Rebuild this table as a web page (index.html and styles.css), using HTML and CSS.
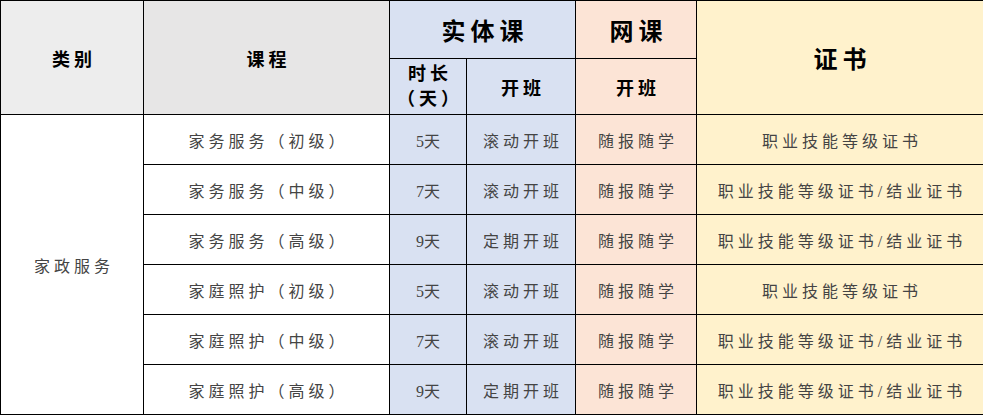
FILE: index.html
```html
<!DOCTYPE html>
<html lang="zh-CN">
<head>
<meta charset="utf-8">
<title>课程表</title>
<link rel="stylesheet" href="styles.css">
</head>
<body>
<table class="course-table">
  <colgroup>
    <col class="c-cat">
    <col class="c-course">
    <col class="c-dur">
    <col class="c-open">
    <col class="c-online">
    <col class="c-cert">
  </colgroup>
  <thead>
    <tr class="head-1">
      <th rowspan="2" class="h h-cat">类别</th>
      <th rowspan="2" class="h h-course">课程</th>
      <th colspan="2" class="h h-big blue">实体课</th>
      <th class="h h-big peach">网课</th>
      <th rowspan="2" class="h h-big yellow">证书</th>
    </tr>
    <tr class="head-2">
      <th class="h blue h-two"><span class="line">时长</span><span class="line">（天）</span></th>
      <th class="h blue">开班</th>
      <th class="h peach">开班</th>
    </tr>
  </thead>
  <tbody>
    <tr>
      <td rowspan="6" class="d cat">家政服务</td>
      <td class="d">家务服务（初级）</td>
      <td class="d blue num">5天</td>
      <td class="d blue">滚动开班</td>
      <td class="d peach">随报随学</td>
      <td class="d yellow">职业技能等级证书</td>
    </tr>
    <tr>
      <td class="d">家务服务（中级）</td>
      <td class="d blue num">7天</td>
      <td class="d blue">滚动开班</td>
      <td class="d peach">随报随学</td>
      <td class="d yellow">职业技能等级证书/结业证书</td>
    </tr>
    <tr>
      <td class="d">家务服务（高级）</td>
      <td class="d blue num">9天</td>
      <td class="d blue">定期开班</td>
      <td class="d peach">随报随学</td>
      <td class="d yellow">职业技能等级证书/结业证书</td>
    </tr>
    <tr>
      <td class="d">家庭照护（初级）</td>
      <td class="d blue num">5天</td>
      <td class="d blue">滚动开班</td>
      <td class="d peach">随报随学</td>
      <td class="d yellow">职业技能等级证书</td>
    </tr>
    <tr>
      <td class="d">家庭照护（中级）</td>
      <td class="d blue num">7天</td>
      <td class="d blue">滚动开班</td>
      <td class="d peach">随报随学</td>
      <td class="d yellow">职业技能等级证书/结业证书</td>
    </tr>
    <tr>
      <td class="d">家庭照护（高级）</td>
      <td class="d blue num">9天</td>
      <td class="d blue">定期开班</td>
      <td class="d peach">随报随学</td>
      <td class="d yellow">职业技能等级证书/结业证书</td>
    </tr>
  </tbody>
</table>
</body>
</html>
```
FILE: styles.css
```css
html, body {
  margin: 0;
  padding: 0;
  background: #ffffff;
}

.course-table {
  border-collapse: collapse;
  table-layout: fixed;
  width: 983px;
  font-family: "Liberation Serif", "Noto Sans CJK SC", serif;
}

.c-cat { width: 143px; }
.c-course { width: 246px; }
.c-dur { width: 77px; }
.c-open { width: 109px; }
.c-online { width: 121px; }
.c-cert { width: 287px; }

.course-table th,
.course-table td {
  border: 1px solid #000;
  padding: 0;
  text-align: center;
  vertical-align: middle;
}

.head-1 { height: 58px; }
.head-2 { height: 56px; }
.course-table tbody tr { height: 50px; }

.h {
  font-size: 18px;
  font-weight: bold;
  color: #000;
  letter-spacing: 4px;
  text-indent: 4px;
}

.h-cat { background: #ededed; }
.h-course { background: #e7e6e6; }

.h-big {
  font-size: 24px;
  letter-spacing: 5px;
  text-indent: 5px;
  padding-top: 4px;
}

.h-two {
  line-height: 25px;
  padding-top: 2px;
}

.line { display: block; }

.d {
  font-size: 16px;
  color: #444;
  letter-spacing: 4px;
  text-indent: 4px;
}

.num {
  letter-spacing: 0;
  text-indent: 0;
}

.cat {
  padding-top: 10px;
}

.blue { background: #d9e1f2; }
.peach { background: #fce4d6; }
.yellow { background: #fff2cc; }
```
